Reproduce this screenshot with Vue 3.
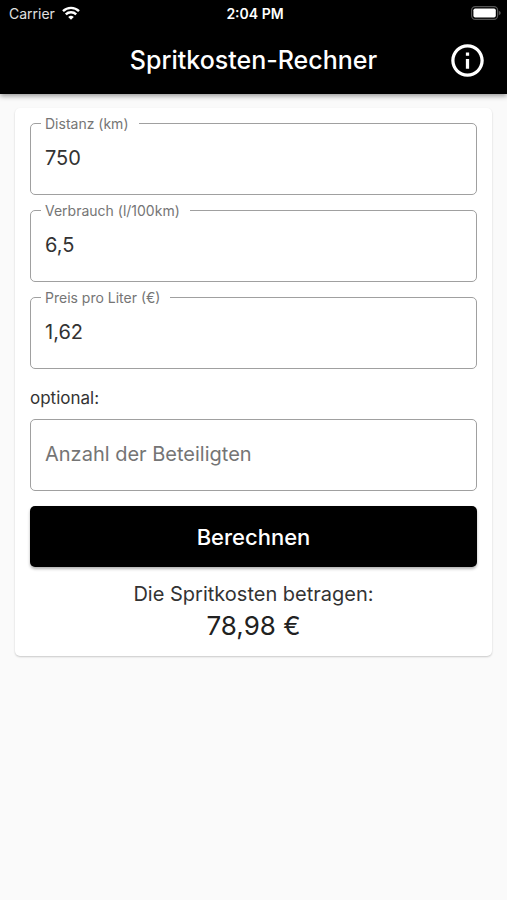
<template>
  <div class="app">
    <header class="app-header">
      <div class="status-bar">
        <div class="carrier">
          <span>Carrier</span>
          <svg class="wifi-icon" viewBox="0 0 18 14" aria-hidden="true">
            <path d="M1 5.2 A11.4 11.4 0 0 1 17 5.2" />
            <path d="M3.8 8.4 A7.4 7.4 0 0 1 14.2 8.4" />
            <path class="wifi-dot" d="M9 13.8 L6.2 10.9 A4.2 4.2 0 0 1 11.8 10.9 Z" />
          </svg>
        </div>
        <span class="clock">2:04 PM</span>
        <svg class="battery-icon" viewBox="0 0 30 14" aria-hidden="true">
          <rect class="battery-case" x="0.6" y="0.6" width="26" height="12.8" rx="3.6" />
          <rect class="battery-level" x="2.4" y="2.4" width="22.4" height="9.2" rx="1.8" />
          <path class="battery-tip" d="M27.8 4.8 Q29.8 5.6 29.8 7 Q29.8 8.4 27.8 9.2 Z" />
        </svg>
      </div>
      <div class="toolbar">
        <h1>Spritkosten-Rechner</h1>
        <button type="button" class="info-btn" aria-label="Info">
          <svg viewBox="0 0 24 24" aria-hidden="true">
            <path d="M11 7h2v2h-2zm0 4h2v6h-2zm1-9C6.48 2 2 6.48 2 12s4.48 10 10 10 10-4.48 10-10S17.52 2 12 2zm0 18c-4.41 0-8-3.59-8-8s3.59-8 8-8 8 3.59 8 8-3.59 8-8 8z" />
          </svg>
        </button>
      </div>
    </header>

    <main>
      <form class="card" @submit.prevent="calculate">
        <div v-for="field in fields" :key="field.id" class="field">
          <label :for="field.id">{{ field.label }}</label>
          <input :id="field.id" v-model="field.value" type="text" inputmode="decimal">
        </div>

        <label class="hint" for="persons">optional:</label>
        <div class="field">
          <input id="persons" v-model="persons" type="text" inputmode="numeric" placeholder="Anzahl der Beteiligten">
        </div>

        <button type="submit" class="submit-btn">Berechnen</button>

        <div class="result">
          <p>Die Spritkosten betragen:</p>
          <output>{{ result }} €</output>
        </div>
      </form>
    </main>
  </div>
</template>

<script setup>
import { ref } from 'vue'

const fields = ref([
  { id: 'distance', label: 'Distanz (km)', value: '750' },
  { id: 'consumption', label: 'Verbrauch (l/100km)', value: '6,5' },
  { id: 'price', label: 'Preis pro Liter (€)', value: '1,62' }
])
const persons = ref('')
const result = ref('')

const toNumber = (text) => Number(text.replace(',', '.')) || 0

const calculate = () => {
  const [distance, consumption, price] = fields.value.map((f) => toNumber(f.value))
  const total = (distance / 100) * consumption * price
  const share = total / (toNumber(persons.value) || 1)
  // small offset so that half cents are rounded up
  const cents = Math.round(share * 100 + 0.000001)
  result.value = (cents / 100).toFixed(2).replace('.', ',')
}

calculate()
</script>

<style>
body {
  background: #fafafa;
}
</style>

<style scoped>
.app {
  font-family: Inter, "Liberation Sans", sans-serif;
  color: #212121;
}

.app-header {
  background: #000;
  color: #fff;
  box-shadow: 0 2px 5px rgba(0, 0, 0, 0.4);
}

.status-bar {
  display: grid;
  grid-template-columns: 1fr auto 1fr;
  align-items: center;
  height: 26px;
  padding: 0 6px 0 9px;
  font-size: 14px;
}

.carrier {
  display: flex;
  align-items: center;
  gap: 7px;
  color: #e0e0e0;
}

.wifi-icon {
  width: 18px;
  height: 14px;
  fill: none;
  stroke: #fff;
  stroke-width: 2.4;
}

.wifi-dot {
  fill: #fff;
  stroke: none;
}

.clock {
  font-weight: 600;
}

.battery-icon {
  justify-self: end;
  width: 30px;
  height: 14px;
}

.battery-case {
  fill: none;
  stroke: #555;
  stroke-width: 1.2;
}

.battery-level {
  fill: #fff;
}

.battery-tip {
  fill: #555;
}

.toolbar {
  display: grid;
  grid-template-columns: 1fr auto 1fr;
  align-items: center;
  height: 68px;
  padding: 0 20px;
}

h1 {
  grid-column: 2;
  margin: 0;
  font-size: 25px;
  font-weight: 500;
}

.info-btn {
  justify-self: end;
  display: flex;
  padding: 0;
  border: none;
  background: none;
  cursor: pointer;
}

.info-btn svg {
  width: 39px;
  height: 39px;
  fill: #fff;
}

.card {
  display: flex;
  flex-direction: column;
  gap: 15px;
  margin: 14px 15px;
  padding: 15px;
  background: #fff;
  border-radius: 5px;
  box-shadow: 0 1px 2px rgba(0, 0, 0, 0.2);
}

.field {
  position: relative;
}

.field label {
  position: absolute;
  top: -8px;
  left: 11px;
  padding: 0 10px 0 4px;
  background: #fff;
  color: #757575;
  font-size: 14px;
  line-height: 18px;
}

.field input {
  display: block;
  box-sizing: border-box;
  width: 100%;
  height: 72px;
  padding: 0 14px 2px;
  border: 1px solid #a0a0a0;
  border-radius: 5px;
  background: none;
  color: #333;
  font: inherit;
  font-size: 20px;
}

.field input::placeholder {
  color: #757575;
  opacity: 1;
}

.hint {
  margin-top: 4px;
  margin-bottom: -5px;
  color: #333;
  font-size: 17px;
  line-height: 21px;
}

.submit-btn {
  height: 61px;
  border: none;
  border-radius: 5px;
  background: #000;
  box-shadow: 0 2px 3px rgba(0, 0, 0, 0.3);
  color: #fff;
  font: inherit;
  font-size: 22px;
  font-weight: 500;
  cursor: pointer;
}

.result {
  display: flex;
  flex-direction: column;
  align-items: center;
  gap: 5px;
}

.result p {
  margin: 0;
  color: #333;
  font-size: 20px;
  line-height: 24px;
}

.result output {
  font-size: 26px;
  line-height: 30px;
}
</style>
